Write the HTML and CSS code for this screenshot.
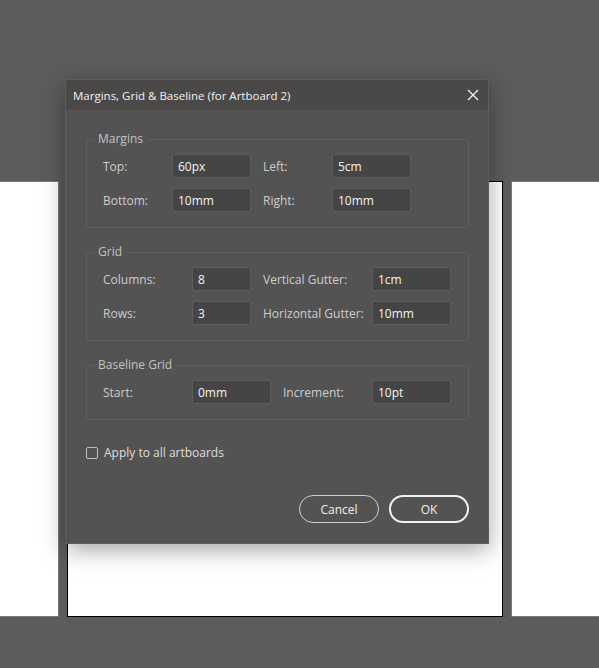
FILE: index.html
```html
<!DOCTYPE html>
<html lang="en">

<head>
    <meta charset="UTF-8">
    <meta name="viewport" content="width=device-width, initial-scale=1.0">
    <title>Margins, Grid &amp; Baseline</title>

    <link rel="stylesheet" href="styles.css">
</head>

<body>
    <main class="canvas">
        <div class="artboard side first"></div>
        <div class="artboard current"></div>
        <div class="artboard side last"></div>
    </main>

    <div class="dialog">
        <div class="title-bar">
            <span>Margins, Grid &amp; Baseline (for Artboard 2)</span>
            <button class="close" aria-label="Close">
                <svg width="12" height="12" viewBox="0 0 12 12">
                    <path d="M1 1 L11 11 M11 1 L1 11" stroke="#f2f2f2" stroke-width="1.3" fill="none" />
                </svg>
            </button>
        </div>

        <div class="dialog-body">
            <fieldset class="margins">
                <legend>Margins</legend>
                <label for="top">Top:</label>
                <input type="text" id="top" value="60px">
                <label for="left">Left:</label>
                <input type="text" id="left" value="5cm">
                <label for="bottom">Bottom:</label>
                <input type="text" id="bottom" value="10mm">
                <label for="right">Right:</label>
                <input type="text" id="right" value="10mm">
            </fieldset>

            <fieldset class="grid">
                <legend>Grid</legend>
                <label for="columns">Columns:</label>
                <input type="text" id="columns" value="8">
                <label for="v-gutter">Vertical Gutter:</label>
                <input type="text" id="v-gutter" value="1cm">
                <label for="rows">Rows:</label>
                <input type="text" id="rows" value="3">
                <label for="h-gutter">Horizontal Gutter:</label>
                <input type="text" id="h-gutter" value="10mm">
            </fieldset>

            <fieldset class="baseline">
                <legend>Baseline Grid</legend>
                <label for="start">Start:</label>
                <input type="text" id="start" value="0mm">
                <label for="increment">Increment:</label>
                <input type="text" id="increment" value="10pt">
            </fieldset>

            <label class="apply">
                <input type="checkbox" id="apply">
                Apply to all artboards
            </label>

            <div class="actions">
                <button class="btn">Cancel</button>
                <button class="btn primary">OK</button>
            </div>
        </div>
    </div>
</body>

</html>
```

FILE: styles.css
```css
body {
    margin: 0;
    height: 668px;
    overflow: hidden;
    background: #5c5c5c;
    font-family: "Open Sans", sans-serif;
    font-size: 12px;
}

.canvas {
    display: flex;
    gap: 8px;
    padding-top: 181px;
}

.artboard {
    flex: none;
    width: 436px;
    height: 436px;
    box-sizing: border-box;
    background: #ffffff;
}

.artboard.side {
    border: 1px solid #7a7a7a;
}

.artboard.first {
    width: 59px;
    border-left: none;
}

.artboard.last {
    width: 88px;
    border-right: none;
}

.artboard.current {
    border: 1px solid #000000;
}

/* dialog sits over the canvas */
.dialog {
    position: absolute;
    left: 65px;
    top: 79px;
    width: 424px;
    background: #535353;
    border: 1px solid #5d5d5d;
    box-sizing: border-box;
    box-shadow: 0 6px 22px rgba(0, 0, 0, 0.35);
}

.title-bar {
    display: flex;
    align-items: center;
    justify-content: space-between;
    height: 30px;
    padding: 0 9px 0 7px;
    background: #4a4948;
    color: #f0f0f0;
    font-size: 11.5px;
}

.close {
    display: flex;
    border: none;
    background: none;
    padding: 0;
}

.dialog-body {
    display: flex;
    flex-direction: column;
    padding: 21px 19px 20px 20px;
}

fieldset {
    display: grid;
    column-gap: 12px;
    row-gap: 10px;
    align-items: center;
    margin: 0 0 16px;
    padding: 7px 16px 15px;
    border: 1px solid #5f5f5f;
    border-radius: 3px;
}

fieldset legend {
    margin-left: -9px;
    padding: 0 4px;
    line-height: 16px;
    color: #c2c2c2;
}

fieldset.margins {
    grid-template-columns: 57px 79px 57px 79px;
}

fieldset.grid {
    grid-template-columns: 77px 59px 97px 79px;
}

fieldset.baseline {
    grid-template-columns: 77px 79px 77px 79px;
}

fieldset label {
    color: #cdcdcd;
    white-space: nowrap;
}

fieldset input {
    height: 24px;
    box-sizing: border-box;
    width: 100%;
    padding: 0 5px;
    border: 1px solid #5d5d5d;
    border-radius: 2px;
    background: #454545;
    color: #f4f4f4;
    font-family: inherit;
    font-size: 12px;
    outline: none;
}

.apply {
    display: flex;
    align-items: center;
    gap: 6px;
    margin-top: 8px;
    color: #dedede;
}

.apply input {
    appearance: none;
    width: 12px;
    height: 12px;
    margin: 0;
    border: 1px solid #bdbdbd;
    border-radius: 2px;
    background: transparent;
}

.actions {
    display: flex;
    justify-content: flex-end;
    gap: 10px;
    margin-top: 34px;
}

.btn {
    width: 80px;
    height: 28px;
    border: 1px solid #cfcfcf;
    border-radius: 14px;
    background: transparent;
    color: #f0f0f0;
    font-family: inherit;
    font-size: 12px;
}

.btn.primary {
    border: 2px solid #f2f2f2;
}
```
